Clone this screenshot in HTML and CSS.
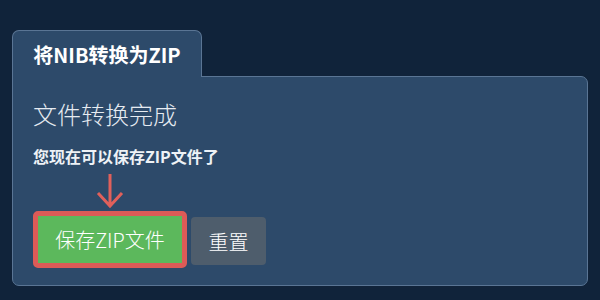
FILE: index.html
```html
<!DOCTYPE html>
<html lang="zh">
<head>
<meta charset="utf-8">
<link rel="stylesheet" href="styles.css">
</head>
<body>
<div class="page">
  <div class="tabs">
    <div class="tab">将NIB转换为ZIP</div>
  </div>
  <div class="panel">
    <h2 class="title">文件转换完成</h2>
    <p class="msg">您现在可以保存ZIP文件了</p>
    <div class="actions">
      <div class="save-wrap">
        <svg class="arrow" width="28" height="36" viewBox="0 0 28 36">
          <path d="M14 1 V33 M2 20 L14 33 L26 20" fill="none" stroke="#e0605b" stroke-width="3"/>
        </svg>
        <button class="btn btn-save">保存ZIP文件</button>
      </div>
      <button class="btn btn-reset">重置</button>
    </div>
  </div>
</div>
</body>
</html>
```
FILE: styles.css
```css
html, body {
  margin: 0;
  padding: 0;
  background: #10233a;
  font-family: "Noto Sans CJK SC", "Noto Sans", sans-serif;
  color: #ffffff;
}
.page {
  padding: 30px 12px 0 12px;
}
.tabs {
  display: flex;
}
.tab {
  position: relative;
  z-index: 1;
  margin-bottom: -1px;
  background: #2d4a6a;
  border: 1px solid #5a7594;
  border-bottom: none;
  border-radius: 7px 7px 0 0;
  width: 188px;
  height: 46px;
  box-sizing: content-box;
  padding: 0;
  display: flex;
  align-items: center;
  justify-content: center;
  font-size: 20px;
  font-weight: 700;
  color: #ffffff;
}
.panel {
  background: #2d4a6a;
  border: 1px solid #5a7594;
  border-radius: 0 7px 7px 7px;
  height: 208px;
  padding: 0 20px;
  box-sizing: content-box;
}
.title {
  margin: 22px 0 0 0;
  font-size: 24px;
  font-weight: 300;
  line-height: 30px;
  color: #e6ebf1;
}
.msg {
  margin: 16px 0 0 0;
  font-size: 16px;
  font-weight: 700;
  line-height: 22px;
  color: #eef2f6;
}
.actions {
  display: flex;
  align-items: flex-end;
  gap: 4px;
  margin-top: 0;
}
.save-wrap {
  display: flex;
  flex-direction: column;
  align-items: center;
}
.arrow {
  display: block;
  margin-top: 6px;
  margin-bottom: 2px;
}
.btn {
  font-family: "Noto Sans CJK SC", "Noto Sans", sans-serif;
  font-size: 20px;
  font-weight: 300;
  color: #ffffff;
  border: none;
  border-radius: 4px;
  height: 48px;
  cursor: pointer;
}
.btn-save {
  background: #5cb85c;
  width: 144px;
  border: 5px solid #dc5b57;
  box-sizing: content-box;
  padding: 0;
  height: 47px;
  border-radius: 5px;
}
.btn-reset {
  background: #4e5d6c;
  width: 75px;
  padding: 0;
  margin-bottom: 3px;
}
```
